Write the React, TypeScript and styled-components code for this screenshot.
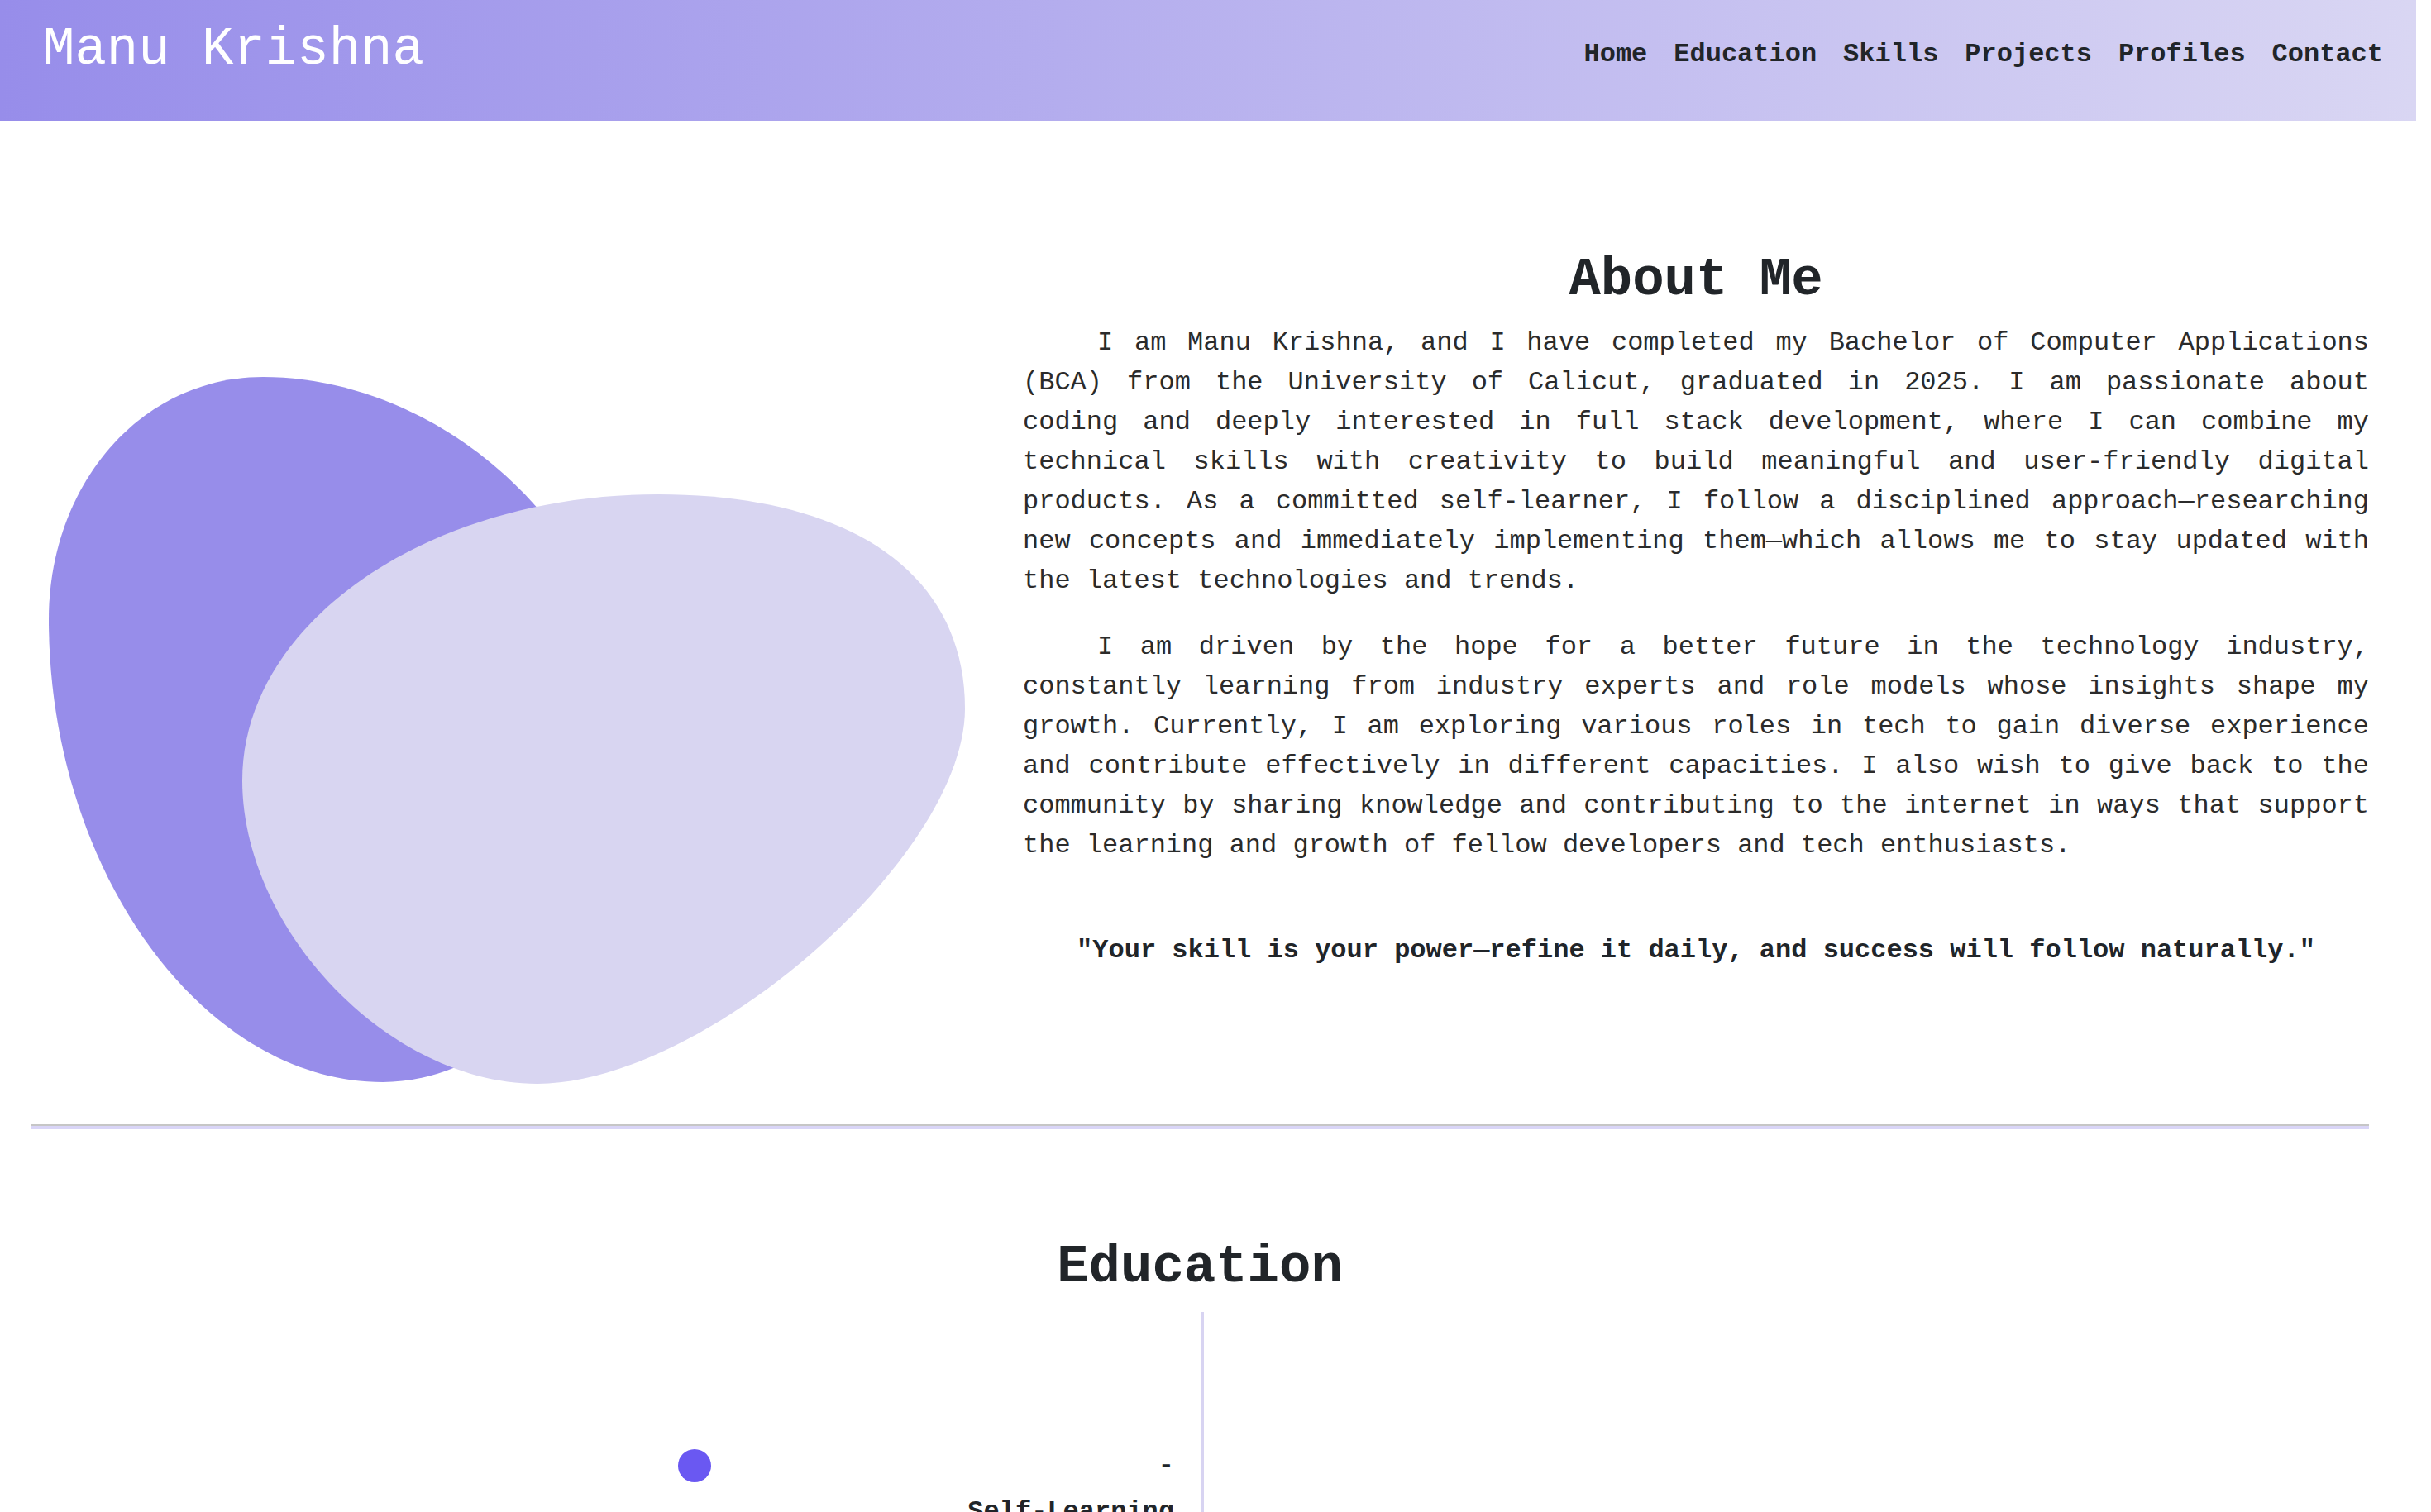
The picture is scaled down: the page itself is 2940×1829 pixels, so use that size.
import React from 'react';
import styled, { createGlobalStyle } from 'styled-components';

const GlobalStyle = createGlobalStyle`
  html, body {
    margin: 0;
    padding: 0;
    background: #ffffff;
  }
  body {
    font-family: "Courier New", Courier, "Nimbus Mono PS", "Nimbus Mono L", FreeMono, "Liberation Mono", monospace;
    color: #212529;
  }
  *, *::before, *::after {
    box-sizing: border-box;
  }
`;

const Header = styled.header`
  width: calc(100% - 18px);
  height: 146px;
  display: flex;
  justify-content: space-between;
  align-items: flex-start;
  padding: 0 40px 0 52px;
  background: linear-gradient(to right, #978dea, #d9d6f3);
`;

const Logo = styled.div`
  margin-top: 24px;
  font-size: 64px;
  line-height: normal;
  color: #ffffff;
`;

const Nav = styled.nav`
  display: flex;
  gap: 32px;
  margin-top: 47px;
`;

const NavLink = styled.a`
  font-size: 32px;
  font-weight: 700;
  line-height: normal;
  color: #212529;
  text-decoration: none;
`;

const Main = styled.main`
  width: 2828px;
  margin-left: 37px;
`;

const About = styled.section`
  display: flex;
  align-items: flex-start;
  padding-top: 157px;
`;

const ArtCol = styled.div`
  flex: 0 0 1200px;
  svg {
    display: block;
  }
`;

const TextCol = styled.div`
  flex: 0 0 1628px;
`;

const SectionTitle = styled.h2`
  margin: 0;
  font-size: 64px;
  line-height: 72px;
  font-weight: 700;
  text-align: center;
  color: #212529;
`;

const Para = styled.p`
  margin: 16px 0 0;
  font-size: 32px;
  line-height: 48px;
  text-align: justify;
  text-indent: 90px;
  color: #2b2b2b;
  & + & {
    margin-top: 32px;
  }
`;

const Quote = styled.p`
  margin: 79px 0 0;
  font-size: 32px;
  line-height: 48px;
  font-weight: 700;
  text-align: center;
  color: #212529;
`;

const Divider = styled.div`
  margin-top: 27px;
  height: 6px;
  border-top: 2px solid #c6c6c6;
  background: #d9d5f7;
`;

const Education = styled.section`
  padding-top: 131px;
`;

const Timeline = styled.div`
  margin-top: 18px;
  display: grid;
  grid-template-columns: 1415px 4px 1fr;
  min-height: 400px;
`;

const TimelineLine = styled.div`
  background: #d8d4f2;
`;

const TimelineCell = styled.div`
  display: flex;
  flex-direction: column;
`;

const Item = styled.div`
  align-self: flex-end;
  width: 600px;
  margin-right: 32px;
  padding-top: 162px;
`;

const ItemHead = styled.div`
  display: flex;
  justify-content: space-between;
  align-items: center;
  height: 48px;
`;

const Dot = styled.span`
  display: block;
  width: 40px;
  height: 40px;
  border-radius: 50%;
  background: #6a58f2;
`;

const ItemDate = styled.span`
  font-size: 32px;
  line-height: 48px;
  font-weight: 700;
`;

const ItemTitle = styled.div`
  margin-top: 8px;
  font-size: 32px;
  line-height: 48px;
  font-weight: 700;
  text-align: right;
`;

const ItemText = styled.div`
  font-size: 28px;
  line-height: 42px;
  text-align: right;
`;

const darkBlobPath =
  'M 318 455 C 538 455, 760 650, 760 900 C 760 1150, 613 1308, 463 1308 C 243 1308, 59 1048, 59 748 C 59 588, 168 455, 318 455 Z';

const lightBlobPath =
  'M 796 597 C 1026 597, 1167 691, 1167 856 C 1167 1036, 850 1310, 650 1310 C 470 1310, 293 1123, 293 943 C 293 753, 516 597, 796 597 Z';

const BlobArt: React.FC = () => (
  <svg width={1200} height={1030} viewBox="37 302 1200 1030" aria-hidden="true">
    <path d={darkBlobPath} fill="#978dea" />
    <path d={lightBlobPath} fill="#d8d5f1" />
  </svg>
);

const links = ['Home', 'Education', 'Skills', 'Projects', 'Profiles', 'Contact'];

export default function App() {
  return (
    <>
      <GlobalStyle />
      <Header>
        <Logo>Manu Krishna</Logo>
        <Nav>
          {links.map((l) => (
            <NavLink key={l} href={`#${l.toLowerCase()}`}>
              {l}
            </NavLink>
          ))}
        </Nav>
      </Header>
      <Main>
        <About id="home">
          <ArtCol>
            <BlobArt />
          </ArtCol>
          <TextCol>
            <SectionTitle>About Me</SectionTitle>
            <Para>
              I am Manu Krishna, and I have completed my Bachelor of Computer Applications (BCA) from the
              University of Calicut, graduated in 2025. I am passionate about coding and deeply interested in
              full stack development, where I can combine my technical skills with creativity to build
              meaningful and user-friendly digital products. As a committed self-learner, I follow a
              disciplined approach—researching new concepts and immediately implementing them—which allows
              me to stay updated with the latest technologies and trends.
            </Para>
            <Para>
              I am driven by the hope for a better future in the technology industry, constantly learning
              from industry experts and role models whose insights shape my growth. Currently, I am exploring
              various roles in tech to gain diverse experience and contribute effectively in different
              capacities. I also wish to give back to the community by sharing knowledge and contributing to
              the internet in ways that support the learning and growth of fellow developers and tech
              enthusiasts.
            </Para>
            <Quote>"Your skill is your power—refine it daily, and success will follow naturally."</Quote>
          </TextCol>
        </About>
        <Divider />
        <Education id="education">
          <SectionTitle>Education</SectionTitle>
          <Timeline>
            <TimelineCell>
              <Item>
                <ItemHead>
                  <Dot />
                  <ItemDate>-</ItemDate>
                </ItemHead>
                <ItemTitle>Self-Learning</ItemTitle>
                <ItemText>Online courses and documentation</ItemText>
              </Item>
            </TimelineCell>
            <TimelineLine />
            <TimelineCell />
          </Timeline>
        </Education>
      </Main>
    </>
  );
}
